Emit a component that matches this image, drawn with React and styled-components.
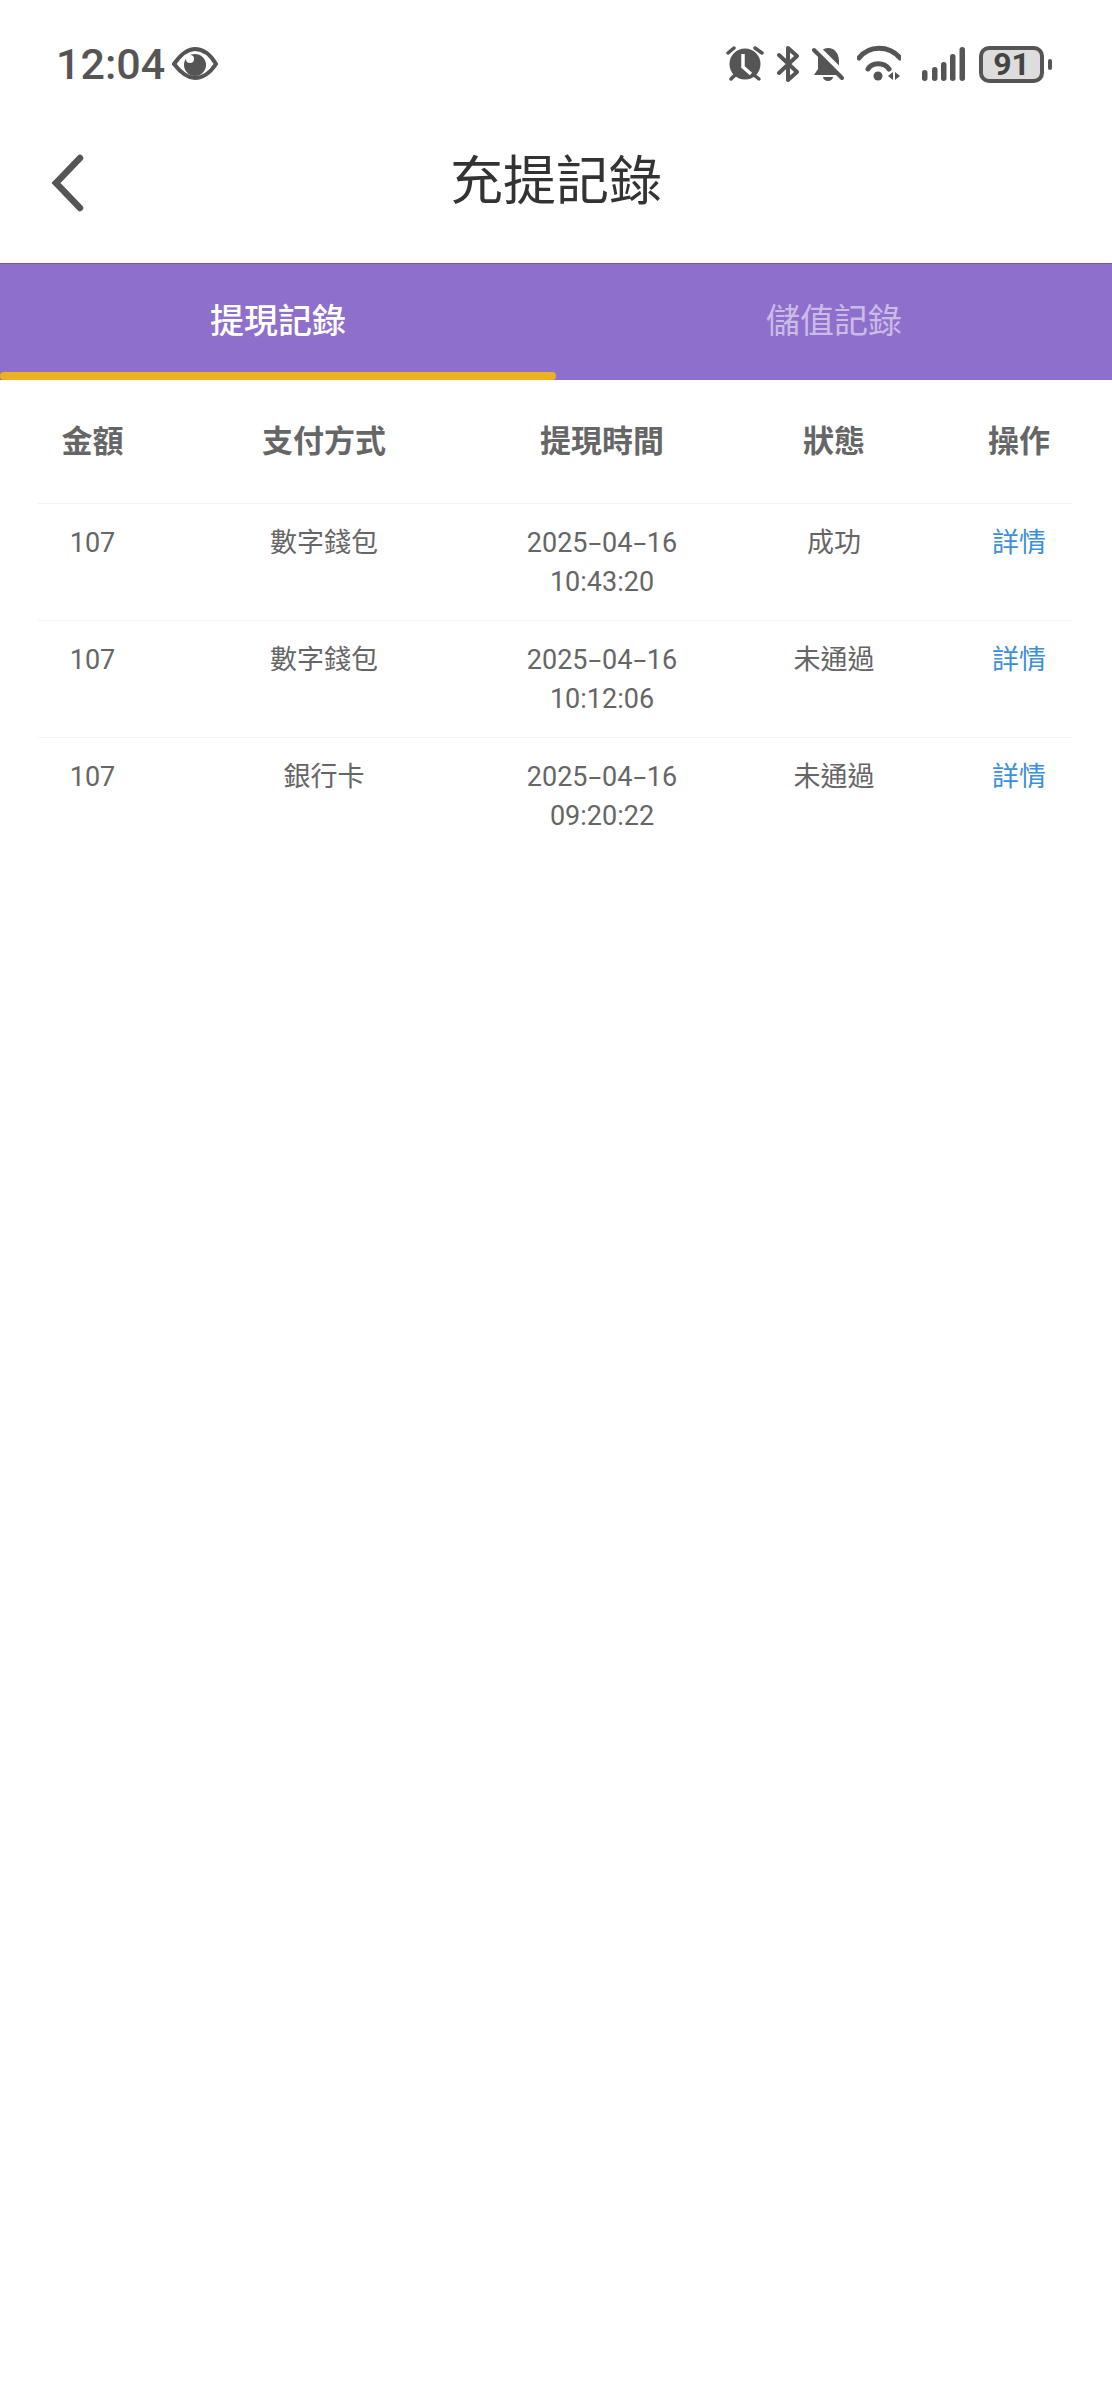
import React from 'react';
import styled, { createGlobalStyle } from 'styled-components';

const GlobalStyle = createGlobalStyle`
    html, body {
        margin: 0;
        padding: 0;
        background: #fff;
    }
    * {
        box-sizing: border-box;
    }
`;

const Page = styled.div`
    width: 1112px;
    min-height: 2400px;
    background: #fff;
    font-family: Roboto, "Noto Sans CJK TC", sans-serif;
`;

// Status bar
const StatusBar = styled.div`
    height: 96px;
    padding: 32px 60px 0 56px;
    display: flex;
    align-items: center;
    justify-content: space-between;
    color: #555;
`;

const StatusLeft = styled.div`
    display: flex;
    align-items: center;
    gap: 7px;
`;

const Clock = styled.span`
    font-size: 43px;
    font-weight: 500;
    line-height: 44px;
`;

const StatusRight = styled.div`
    display: flex;
    align-items: center;
    gap: 13px;
`;

const StatusSvg = styled.svg`
    display: block;
    height: 38px;
    width: ${({ $w }) => $w}px;
    margin-left: ${({ $ml }) => $ml || 0}px;
`;

const Battery = styled.div`
    display: flex;
    align-items: center;
    gap: 4px;
    margin-left: 1px;
`;

const BatteryBody = styled.div`
    width: 65px;
    height: 37px;
    border: 4px solid #555;
    border-radius: 10px;
    background: #ddd;
    color: #444;
    font-size: 32px;
    font-weight: 700;
    line-height: 29px;
    text-align: center;
`;

const BatteryNub = styled.div`
    width: 4px;
    height: 11px;
    border-radius: 2px;
    background: #555;
`;

// Navigation bar
const NavBar = styled.div`
    height: 167px;
    padding-top: 6px;
    position: relative;
    display: flex;
    align-items: center;
    justify-content: center;
`;

const BackIcon = styled.svg`
    position: absolute;
    left: 48px;
    top: 57px;
    width: 38px;
    height: 60px;
`;

const Title = styled.div`
    font-size: 53px;
    font-weight: 400;
    color: #333;
    line-height: 1;
`;

// Tabs
const Tabs = styled.div`
    height: 117px;
    display: grid;
    grid-template-columns: 1fr 1fr;
    background: #8e6fcc;
    border-top: 1px solid #75599f;
`;

const Tab = styled.div`
    position: relative;
    display: flex;
    align-items: center;
    justify-content: center;
    padding-bottom: 8px;
    font-size: 34px;
    font-weight: ${({ $active }) => ($active ? 500 : 400)};
    color: ${({ $active }) => ($active ? '#fff' : 'rgba(255,255,255,0.55)')};
    &::after {
        content: '';
        display: ${({ $active }) => ($active ? 'block' : 'none')};
        position: absolute;
        left: 0;
        right: 0;
        bottom: 0;
        height: 8px;
        border-radius: 4px;
        background: #ecb11f;
    }
`;

// Table
const Table = styled.div`
    margin: 0 39px 0 38px;
`;

const Row = styled.div`
    display: grid;
    grid-template-columns: 109px 354px 202px 262px 108px;
    text-align: center;
`;

const HeadRow = styled(Row)`
    height: 123px;
    padding-bottom: 7px;
    align-items: center;
    font-size: 31px;
    font-weight: 700;
    color: #666;
`;

const BodyRow = styled(Row)`
    padding: 20px 0 18px;
    border-top: 1px solid #f3f3f3;
    font-size: 27px;
    line-height: 39px;
    color: #666;
`;

const DateLine = styled.div`
    white-space: nowrap;
`;

const Dash = styled.span`
    display: inline-block;
    margin: 0 3.5px;
    transform: scaleX(1.7);
`;

const DetailLink = styled.a`
    color: #3d8fd9;
    text-decoration: none;
`;

const records = [
    { amount: '107', method: '數字錢包', date: '2025-04-16', time: '10:43:20', status: '成功' },
    { amount: '107', method: '數字錢包', date: '2025-04-16', time: '10:12:06', status: '未通過' },
    { amount: '107', method: '銀行卡', date: '2025-04-16', time: '09:20:22', status: '未通過' },
];

const ink = '#555';

const App = () => {
    return (
        <Page>
            <GlobalStyle />
            <StatusBar>
                <StatusLeft>
                    <Clock>12:04</Clock>
                    {/* Eye */}
                    <StatusSvg $w={46} viewBox="0 0 46 38">
                        <path d="M2 19 C9 9 15 4 23 4 C31 4 38 9 44 19 C38 28 31 33 23 33 C15 33 9 28 2 19 Z" fill="none" stroke={ink} strokeWidth="4" />
                        <circle cx="23" cy="20" r="11" fill={ink} />
                        <circle cx="18" cy="14" r="4" fill="#fff" />
                    </StatusSvg>
                </StatusLeft>
                <StatusRight>
                    {/* Alarm */}
                    <StatusSvg $w={38} viewBox="0 0 38 38">
                        <g stroke={ink} strokeWidth="3.5" strokeLinecap="round" fill="none">
                            <path d="M2 8 L8 3" />
                            <path d="M29 3 L36 8" />
                            <path d="M5 34 L9 30" />
                            <path d="M28 30 L33 34" />
                        </g>
                        <circle cx="19" cy="19" r="15.5" fill={ink} />
                        <path d="M17 9 V22 L25 29" fill="none" stroke="#fff" strokeWidth="3.5" />
                    </StatusSvg>
                    {/* Bluetooth */}
                    <StatusSvg $w={22} viewBox="0 0 22 38">
                        <path d="M2 10 L20 27 L11 35 L11 3 L20 11 L2 28" fill="none" stroke={ink} strokeWidth="4" strokeLinecap="round" strokeLinejoin="round" />
                    </StatusSvg>
                    {/* Muted bell */}
                    <StatusSvg $w={32} viewBox="0 0 32 38">
                        <path d="M16 3 C23 3 27 9 27 16 L27 24 L31 30 L2 30 L6 24 L6 14 C6 8 10 3 16 3 Z" fill={ink} />
                        <path d="M11 32 H21 A5 4 0 0 1 11 32 Z" fill={ink} />
                        <path d="M5 2 L33 30" stroke="#fff" strokeWidth="5" />
                        <path d="M2 5 L30 33" stroke={ink} strokeWidth="4" strokeLinecap="round" />
                    </StatusSvg>
                    {/* Wifi */}
                    <StatusSvg $w={44} viewBox="0 0 44 38">
                        <path d="M2 13 C12 0 32 0 43 13" fill="none" stroke={ink} strokeWidth="5" strokeLinecap="round" />
                        <path d="M11 24 C15 17 27 17 32 24" fill="none" stroke={ink} strokeWidth="5" strokeLinecap="round" />
                        <circle cx="21" cy="31" r="4.5" fill={ink} />
                        <path d="M31 31 L36 27 V35 Z" fill={ink} />
                        <path d="M38 27 L43 31 L38 35 Z" fill={ink} />
                    </StatusSvg>
                    {/* Signal */}
                    <StatusSvg $w={44} $ml={7} viewBox="0 0 44 38">
                        <rect x="1" y="25" width="5.5" height="11" rx="2.7" fill={ink} />
                        <rect x="11" y="22" width="5.5" height="14" rx="2.7" fill={ink} />
                        <rect x="20" y="17" width="5.5" height="19" rx="2.7" fill={ink} />
                        <rect x="29" y="9" width="5.5" height="27" rx="2.7" fill={ink} />
                        <rect x="38.5" y="2" width="5.5" height="34" rx="2.7" fill={ink} />
                    </StatusSvg>
                    <Battery>
                        <BatteryBody>91</BatteryBody>
                        <BatteryNub />
                    </Battery>
                </StatusRight>
            </StatusBar>

            <NavBar>
                <BackIcon viewBox="0 0 38 60">
                    <path d="M32 5 L8 30 L32 55" fill="none" stroke={ink} strokeWidth="6.5" strokeLinecap="round" strokeLinejoin="miter" />
                </BackIcon>
                <Title>充提記錄</Title>
            </NavBar>

            <Tabs>
                <Tab $active>提現記錄</Tab>
                <Tab>儲值記錄</Tab>
            </Tabs>

            <Table>
                <HeadRow>
                    <div>金額</div>
                    <div>支付方式</div>
                    <div>提現時間</div>
                    <div>狀態</div>
                    <div>操作</div>
                </HeadRow>
                {records.map((record) => (
                    <BodyRow key={record.time}>
                        <div>{record.amount}</div>
                        <div>{record.method}</div>
                        <div>
                            <DateLine>
                                {record.date.split('-').map((part, index) => (
                                    <React.Fragment key={index}>
                                        {index > 0 && <Dash>-</Dash>}
                                        {part}
                                    </React.Fragment>
                                ))}
                            </DateLine>
                            <div>{record.time}</div>
                        </div>
                        <div>{record.status}</div>
                        <div>
                            <DetailLink>詳情</DetailLink>
                        </div>
                    </BodyRow>
                ))}
            </Table>
        </Page>
    );
};

export default App;
